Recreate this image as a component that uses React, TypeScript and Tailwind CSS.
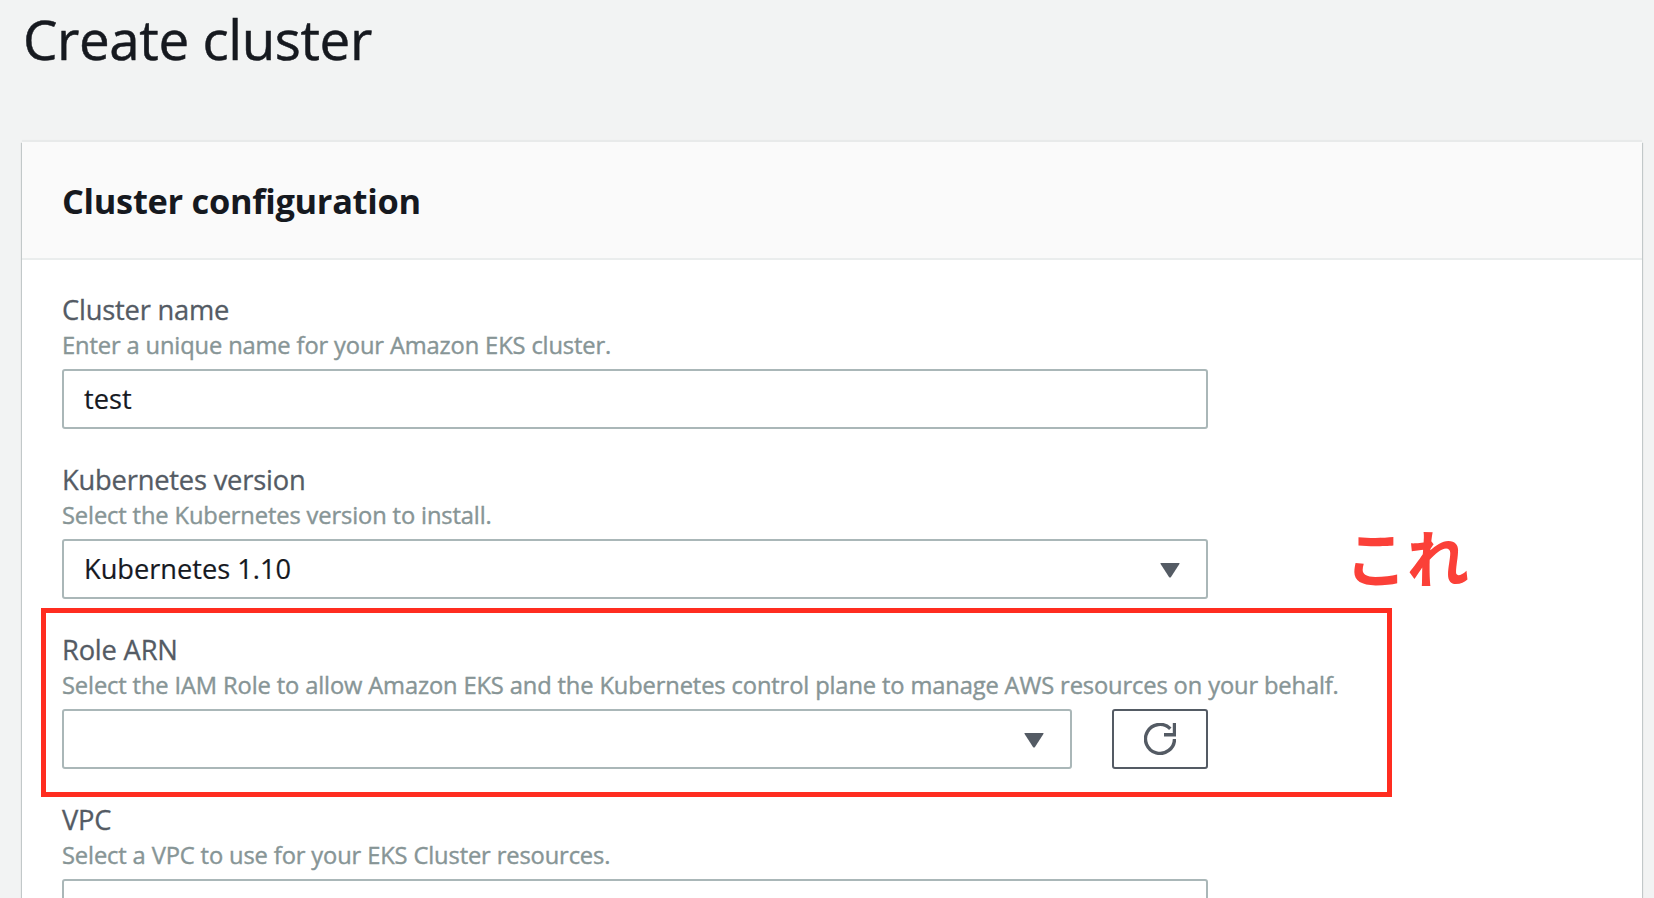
const FONT = "font-['Open_Sans','Noto_Sans',sans-serif]";

function Caret() {
  return (
    <svg width="20" height="16" viewBox="0 0 20 16" className="block flex-none">
      <path d="M1 1 H19 Q20 1 19.4 2 L11 15 Q10 16 9 15 L0.6 2 Q0 1 1 1 Z" fill="#545b64" />
    </svg>
  );
}

function RefreshIcon() {
  return (
    <svg width="32" height="32" viewBox="0 0 32 32" fill="none" className="block">
      <path d="M26.3 5.7 A14.5 14.5 0 1 0 30.5 16" stroke="#545b64" strokeWidth="3.4" />
      <path d="M20 11.7 H30.5 V0" stroke="#545b64" strokeWidth="3.4" />
    </svg>
  );
}

function Field({ label, hint, children }: { label: string; hint: string; children: React.ReactNode }) {
  return (
    <div className="h-[170px]">
      <div className="text-[27.3px] leading-[36px] text-[#545b64] tracking-[-0.2px] [-webkit-text-stroke:0.3px_#545b64]">{label}</div>
      <div className="mt-[2px] whitespace-nowrap text-[23.7px] leading-[31px] text-[#879596] tracking-[-0.13px] [-webkit-text-stroke:0.4px_#879596]">{hint}</div>
      <div className="mt-[8px]">{children}</div>
    </div>
  );
}

function Box({ children, className = '' }: { children?: React.ReactNode; className?: string }) {
  return (
    <div className={`flex h-[60px] items-center justify-between rounded-[3px] border-2 border-[#aab7b8] bg-white pl-[20px] pr-[26px] pt-[1px] text-[27.2px] text-[#16191f] [-webkit-text-stroke:0.2px_#16191f] ${className}`}>
      {children}
    </div>
  );
}

export default function App() {
  return (
    <div className={`relative h-[898px] overflow-hidden bg-[#f2f3f3] ${FONT}`}>
      <h1 className="pl-[23px] pt-[4px] text-[54.7px] leading-[70px] font-normal text-[#16191f] tracking-[-0.4px] [-webkit-text-stroke:0.5px_#16191f]">Create cluster</h1>

      <div className="ml-[22px] mr-[12px] mt-[68px] h-[900px] bg-white shadow-[0_1px_1px_0_rgba(0,28,36,0.3),1px_1px_1px_0_rgba(0,28,36,0.15),-1px_1px_1px_0_rgba(0,28,36,0.15),0_-2px_1px_0_rgba(0,28,36,0.04)]">
        <div className="flex h-[118px] items-center border-b-2 border-[#eaeded] bg-[#fafafa] pl-[40px] pt-[2px]">
          <h2 className="text-[34.4px] font-bold text-[#16191f] tracking-[-0.3px]">Cluster configuration</h2>
        </div>

        <div className="pl-[40px] pt-[32px]">
          <div className="w-[1146px]">
            <Field label="Cluster name" hint="Enter a unique name for your Amazon EKS cluster.">
              <Box>test</Box>
            </Field>
            <Field label="Kubernetes version" hint="Select the Kubernetes version to install.">
              <Box>
                Kubernetes 1.10
                <Caret />
              </Box>
            </Field>
            <Field label="Role ARN" hint="Select the IAM Role to allow Amazon EKS and the Kubernetes control plane to manage AWS resources on your behalf.">
              <div className="flex gap-[40px]">
                <Box className="flex-1">
                  <span />
                  <Caret />
                </Box>
                <button className="flex h-[60px] w-[96px] items-center justify-center rounded-[3px] border-2 border-[#545b64] bg-white">
                  <RefreshIcon />
                </button>
              </div>
            </Field>
            <Field label="VPC" hint="Select a VPC to use for your EKS Cluster resources.">
              <Box />
            </Field>
          </div>
        </div>
      </div>

      {/* annotation drawn over the form */}
      <div className="absolute left-[41px] top-[608px] h-[189px] w-[1351px] border-[5px] border-[#ff2d20]" />
      <div className="absolute left-[1345px] top-[514px] text-[62px] leading-[84px] font-bold text-[#fb4038] font-['Noto_Sans_CJK_JP',sans-serif]">
        これ
      </div>
    </div>
  );
}
